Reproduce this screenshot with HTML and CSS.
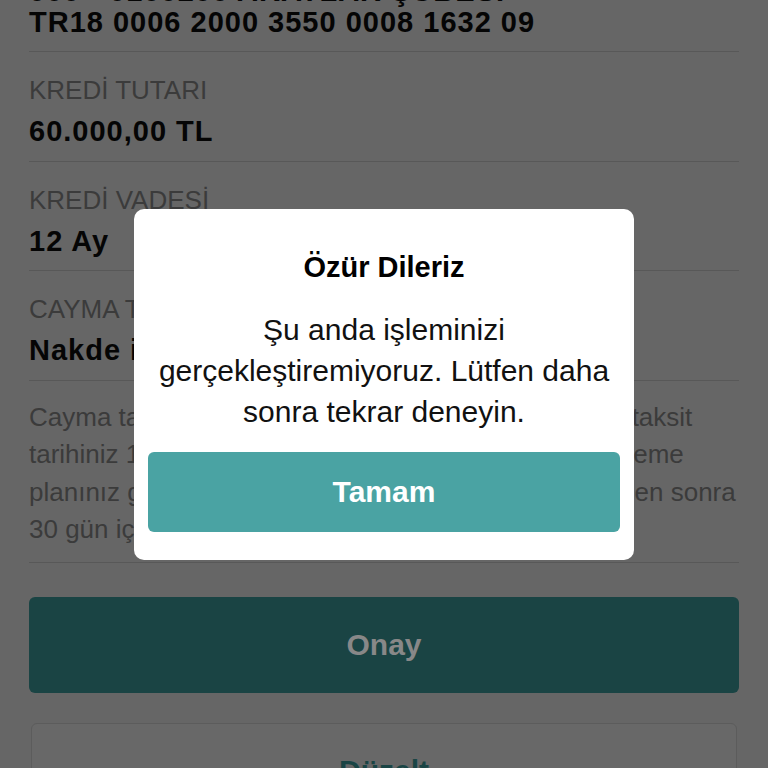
FILE: index.html
```html
<!DOCTYPE html>
<html lang="tr">
<head>
<meta charset="utf-8">
<title>Kredi Onay</title>
<link rel="stylesheet" href="styles.css">
</head>
<body>
<main class="screen">
  <section class="row">
    <div class="label">HESAP BİLGİLERİ</div>
    <div class="value">000 - 0100200 AKATLAR ŞUBESİ<br>TR18 0006 2000 3550 0008 1632 09</div>
  </section>
  <section class="row">
    <div class="label">KREDİ TUTARI</div>
    <div class="value">60.000,00 TL</div>
  </section>
  <section class="row">
    <div class="label">KREDİ VADESİ</div>
    <div class="value">12 Ay</div>
  </section>
  <section class="row">
    <div class="label">CAYMA TERCİHİ</div>
    <div class="value">Nakde iade</div>
  </section>
  <section class="note">
    <p>Cayma talebinizin onaylandığı takdirde kredinizin ilk taksit<br>tarihiniz 15.09.2014 olarak güncellenecek ve yeni ödeme<br>planınız güncellenecektir. Kredi kullandırım tarihinizden sonra<br>30 gün içinde cayma hakkınızı kullanabilirsiniz.</p>
  </section>
  <div class="actions">
    <button class="btn btn-primary" type="button">Onay</button>
    <button class="btn btn-secondary" type="button">Düzelt</button>
  </div>
</main>

<div class="overlay">
  <div class="dialog" role="alertdialog">
    <h2 class="dialog-title">Özür Dileriz</h2>
    <p class="dialog-text">Şu anda işleminizi gerçekleştiremiyoruz. Lütfen daha sonra tekrar deneyin.</p>
    <button class="dialog-btn" type="button">Tamam</button>
  </div>
</div>
</body>
</html>
```

FILE: styles.css
```css
html, body {
  margin: 0;
  padding: 0;
}

body {
  width: 768px;
  height: 768px;
  overflow: hidden;
  background: #666666;
  font-family: "Liberation Sans", Arial, "Helvetica Neue", sans-serif;
  color: #000;
}

.screen {
  padding: 0 29px;
  margin-top: -88.5px;
}

.row {
  padding: 23px 0 13.5px;
  border-bottom: 1px solid #585858;
}

.label {
  font-size: 26px;
  line-height: 30px;
  color: #3b3b3b;
}

.value {
  margin-top: 11px;
  font-size: 29px;
  line-height: 31px;
  font-weight: bold;
  letter-spacing: 1px;
  color: #050505;
  white-space: nowrap;
}

.note {
  padding: 18px 0 13.5px;
  border-bottom: 1px solid #585858;
}

.note p {
  margin: 0;
  font-size: 26px;
  line-height: 37.5px;
  color: #3b3b3b;
  white-space: nowrap;
}

.actions {
  display: flex;
  flex-direction: column;
  gap: 30px;
  margin-top: 34px;
}

.btn {
  display: flex;
  align-items: center;
  justify-content: center;
  height: 96px;
  border-radius: 6px;
  font-family: inherit;
  font-size: 30px;
  font-weight: bold;
  padding: 0;
}

.btn-primary {
  border: none;
  background: #1a4444;
  color: #888888;
}

.btn-secondary {
  margin: 0 2px;
  background: #686868;
  border: 1px solid #5c5c5c;
  color: #1a4545;
}

.overlay {
  position: fixed;
  inset: 0;
  display: flex;
  align-items: center;
  justify-content: center;
}

.dialog {
  box-sizing: border-box;
  width: 500px;
  padding: 41px 14px 28px;
  background: #ffffff;
  border-radius: 10px;
  text-align: center;
}

.dialog-title {
  margin: 0;
  font-size: 29px;
  line-height: 34px;
  font-weight: bold;
  color: #000;
}

.dialog-text {
  margin: 25px 0 0;
  font-size: 30px;
  line-height: 41px;
  color: #111;
}

.dialog-btn {
  display: flex;
  align-items: center;
  justify-content: center;
  width: 100%;
  height: 80px;
  margin-top: 20px;
  padding: 0;
  border: none;
  border-radius: 6px;
  background: #4aa3a3;
  color: #ffffff;
  font-family: inherit;
  font-size: 30px;
  font-weight: bold;
}
```
